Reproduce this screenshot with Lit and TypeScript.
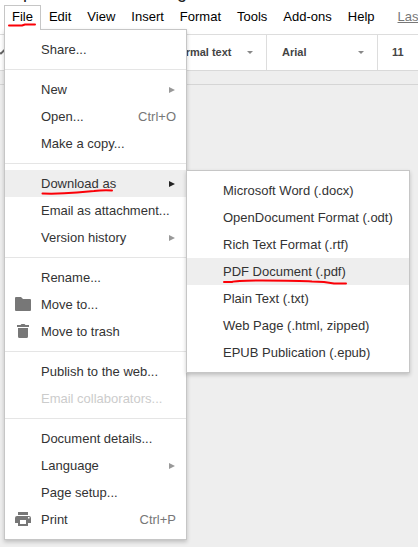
import { LitElement, html, css, svg, nothing } from "lit";
import { customElement, property } from "lit/decorators.js";

interface Entry {
  label?: string;
  icon?: "folder" | "trash" | "print";
  keys?: string;
  sub?: boolean;
  active?: boolean;
  disabled?: boolean;
}

const FILE_MENU: Entry[] = [
  { label: "Share..." },
  {},
  { label: "New", sub: true },
  { label: "Open...", keys: "Ctrl+O" },
  { label: "Make a copy..." },
  {},
  { label: "Download as", sub: true, active: true },
  { label: "Email as attachment..." },
  { label: "Version history", sub: true },
  {},
  { label: "Rename..." },
  { label: "Move to...", icon: "folder" },
  { label: "Move to trash", icon: "trash" },
  {},
  { label: "Publish to the web..." },
  { label: "Email collaborators...", disabled: true },
  {},
  { label: "Document details..." },
  { label: "Language", sub: true },
  { label: "Page setup..." },
  { label: "Print", icon: "print", keys: "Ctrl+P" },
];

const DOWNLOAD_MENU: Entry[] = [
  { label: "Microsoft Word (.docx)" },
  { label: "OpenDocument Format (.odt)" },
  { label: "Rich Text Format (.rtf)" },
  { label: "PDF Document (.pdf)", active: true },
  { label: "Plain Text (.txt)" },
  { label: "Web Page (.html, zipped)" },
  { label: "EPUB Publication (.epub)" },
];

const ICONS = {
  folder: svg`<path d="M1 3Q1 2 2 2H7L9 4H16Q17 4 17 5V15Q17 16 16 16H2Q1 16 1 15Z"/>`,
  trash: svg`<path d="M3 3H6.500L7.500 2H10.500L11.500 3H15V5H3ZM4 6H14V14.500Q14 16 12.500 16H5.500Q4 16 4 14.500Z"/>`,
  print: svg`<path fill-rule="evenodd" d="M4 2H14V5H4ZM3 6H15Q17 6 17 8V13H14V16H4V13H1V8Q1 6 3 6ZM6 10V14H12V10ZM14 7V8.500H15.500V7Z"/>`,
};

@customElement("menu-panel")
export class MenuPanel extends LitElement {
  @property({ attribute: false }) entries: Entry[] = [];

  static styles = css`
    :host {
      display: block;
      box-sizing: border-box;
      padding: 6px 0;
      background: #fff;
      border: 1px solid #c6c6c6;
      box-shadow: 0 2px 4px rgba(0, 0, 0, 0.2);
      font: 13px/27px "Liberation Sans", Arial, sans-serif;
      color: #333;
    }
    .item {
      display: flex;
      align-items: center;
      height: 27px;
      white-space: nowrap;
    }
    .active {
      background: #eee;
    }
    .disabled {
      color: #ccc;
    }
    .slot {
      width: 36px;
      height: 18px;
      flex: none;
      box-sizing: border-box;
      margin-bottom: 1px;
      padding-left: 9px;
    }
    svg {
      display: block;
      fill: #777;
    }
    .label {
      flex: 1;
    }
    .keys {
      color: #777;
      margin-right: 10px;
    }
    .arrow {
      width: 0;
      height: 0;
      margin-right: 11px;
      border-left: 6px solid #999;
      border-top: 3px solid transparent;
      border-bottom: 3px solid transparent;
    }
    .active .arrow {
      border-left-color: #222;
    }
    .rule {
      height: 1px;
      margin: 6px 0;
      background: #e5e5e5;
    }
  `;

  render() {
    return this.entries.map((e) =>
      e.label
        ? html`<div class="item ${e.active ? "active" : ""} ${e.disabled ? "disabled" : ""}">
            <span class="slot">${e.icon ? html`<svg width="18" height="18" viewBox="0 0 18 18">${ICONS[e.icon]}</svg>` : nothing}</span>
            <span class="label">${e.label}</span>
            ${e.keys ? html`<span class="keys">${e.keys}</span>` : nothing}
            ${e.sub ? html`<span class="arrow"></span>` : nothing}
          </div>`
        : html`<div class="rule"></div>`
    );
  }
}

@customElement("app-root")
export class AppRoot extends LitElement {
  static styles = css`
    :host {
      display: block;
      position: relative;
      width: 418px;
      height: 547px;
      overflow: hidden;
      background: #eee;
      font-family: "Liberation Sans", Arial, sans-serif;
    }
    .title {
      height: 5px;
      overflow: hidden;
      background: #fff;
      display: flex;
      gap: 144px;
      padding-left: 23px;
      font-size: 18px;
      line-height: 20px;
      color: #222;
    }
    .title span {
      margin-top: -18px;
    }
    .bar {
      display: flex;
      height: 29px;
      padding-left: 4px;
      background: #fff;
      font-size: 13px;
      line-height: 22px;
      color: #000;
      white-space: nowrap;
    }
    .bar span {
      box-sizing: border-box;
      height: 25px;
      padding: 0 7px;
      border: 1px solid transparent;
    }
    .bar .open {
      position: relative;
      z-index: 3;
      background: #fff;
      border-color: #c6c6c6;
      border-bottom: none;
    }
    .bar .last {
      margin-left: 7px;
      color: #777;
      text-decoration: underline;
    }
    .tools {
      display: flex;
      box-sizing: border-box;
      height: 37px;
      border-top: 1px solid #ddd;
      border-bottom: 1px solid #d9d9d9;
      background: #fff;
      color: #444;
      font-size: 11px;
      font-weight: bold;
      line-height: 35px;
    }
    .cell {
      display: flex;
      box-sizing: border-box;
      align-items: center;
      justify-content: space-between;
      border-right: 1px solid #ddd;
      padding: 0 13px 0 15px;
    }
    .style {
      width: 267px;
      padding-left: 0;
    }
    .style span {
      margin-left: 170px;
      margin-right: auto;
    }
    .font {
      width: 111px;
    }
    .size {
      border: none;
      padding-left: 14px;
    }
    .brush {
      width: 1px;
      height: 35px;
      overflow: visible;
      flex: none;
    }
    .caret {
      width: 0;
      height: 0;
      border-top: 3px solid #888;
      border-left: 3px solid transparent;
      border-right: 3px solid transparent;
    }
    .ruler {
      height: 13px;
      border-bottom: 1px solid #d5d5d5;
    }
    .file {
      position: absolute;
      left: 4px;
      top: 29px;
      width: 183px;
    }
    .download {
      position: absolute;
      left: 186px;
      top: 170px;
      width: 224px;
    }
    .ink {
      position: absolute;
      left: 0;
      top: 0;
      z-index: 5;
      fill: none;
      stroke: #fb0007;
      stroke-width: 2;
      stroke-linecap: round;
      stroke-linejoin: round;
    }
  `;

  render() {
    return html`
      <div class="title"><span>p</span><span>g</span></div>
      <div class="bar">
        <span class="open">File</span><span>Edit</span><span>View</span><span>Insert</span><span>Format</span
        ><span>Tools</span><span>Add-ons</span><span>Help</span><span class="last">Last edit</span>
      </div>
      <div class="tools">
        <div class="cell style">
          <svg class="brush" viewBox="0 0 1 35" width="1" height="35"><path d="M-1 18L1 18.500L4.500 15" fill="none" stroke="#666" stroke-width="2" /></svg>
          <span>Normal text</span><i class="caret"></i>
        </div>
        <div class="cell font">Arial<i class="caret"></i></div>
        <div class="cell size">11</div>
      </div>
      <div class="ruler"></div>
      <menu-panel class="file" .entries=${FILE_MENU}></menu-panel>
      <menu-panel class="download" .entries=${DOWNLOAD_MENU}></menu-panel>
      <svg class="ink" width="418" height="547" viewBox="0 0 418 547">
        <path d="M9 25.500H22L25 24.500H35" />
        <path d="M42.500 193.500Q60 194 77 192.500L94 191Q103 190 112 190.500" />
        <path d="M224 282H232Q236 280.500 262 280.500Q300 280.500 312 281.500L324 282L334 283.500H346" />
      </svg>
    `;
  }
}
